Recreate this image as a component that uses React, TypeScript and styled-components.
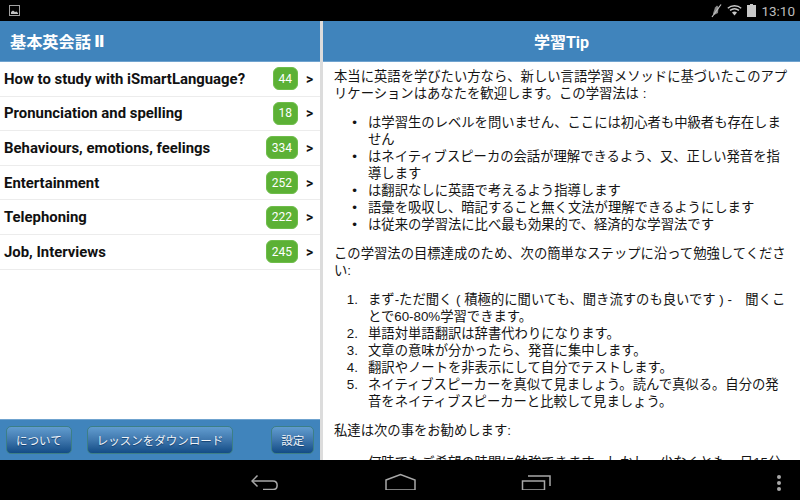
import { createGlobalStyle, styled } from "styled-components";

const GlobalStyle = createGlobalStyle`
    html, body {
        margin: 0;
        padding: 0;
        background: #000;
    }
`;

const Screen = styled.div`
    width: 800px;
    height: 500px;
    display: flex;
    flex-direction: column;
    overflow: hidden;
    background: #000;
    font-family: "Liberation Sans", "Noto Sans CJK JP", sans-serif;
`;

const StatusBar = styled.div`
    height: 21px;
    flex: none;
    display: flex;
    align-items: center;
    justify-content: space-between;
    padding: 0 5px 0 9px;
    box-sizing: border-box;
    background: #000;
`;

const StatusRight = styled.div`
    display: flex;
    align-items: center;
    gap: 4px;
`;

const Clock = styled.span`
    font-family: Roboto, sans-serif;
    font-size: 13.5px;
    color: #bdbdbd;
    margin-left: 1px;
`;

const Main = styled.div`
    flex: 1;
    min-height: 0;
    display: flex;
    background: #fff;
`;

const LeftPane = styled.div`
    width: 320px;
    flex: none;
    display: flex;
    flex-direction: column;
`;

const Divider = styled.div`
    width: 3px;
    flex: none;
    background: #dcdcdc;
`;

const RightPane = styled.div`
    flex: 1;
    min-width: 0;
    display: flex;
    flex-direction: column;
`;

const LeftHeader = styled.header`
    height: 41px;
    flex: none;
    display: flex;
    align-items: center;
    padding-left: 10px;
    background: #4084bc;
    border-bottom: 1px solid #6fa3cf;
    box-sizing: border-box;
    color: #fff;
    font-family: "Noto Sans CJK JP", sans-serif;
    font-size: 16.2px;
    font-weight: 700;
`;

const Numeral = styled.span`
    font-family: "DejaVu Sans", sans-serif;
    font-weight: 700;
    margin-left: 3px;
`;

const RightHeader = styled(LeftHeader)`
    justify-content: center;
    padding-left: 0;
    font-family: Roboto, "Noto Sans CJK JP", sans-serif;
    font-size: 16px;
`;

const Topics = styled.ul`
    flex: 1;
    min-height: 0;
    margin: 0;
    padding: 0;
    list-style: none;
`;

const Topic = styled.li`
    height: 34.6px;
    box-sizing: border-box;
    display: flex;
    align-items: center;
    padding: 0 7px 0 4px;
    border-bottom: 1px solid #ececec;
`;

const TopicName = styled.span`
    flex: 1;
    font-family: Roboto, sans-serif;
    font-size: 14.9px;
    font-weight: 700;
    color: #111;
`;

const Badge = styled.span`
    min-width: 25px;
    height: 23px;
    padding: 0 5px;
    box-sizing: border-box;
    display: flex;
    align-items: center;
    justify-content: center;
    border-radius: 6px;
    background: #5cb135;
    border: 1px solid #6fbd4b;
    font-family: Roboto, sans-serif;
    font-size: 12px;
    color: #fff;
`;

const Chevron = styled.span`
    width: 7px;
    margin-left: 8px;
    font-family: Roboto, sans-serif;
    font-size: 14px;
    font-weight: 700;
    color: #111;
`;

const Footer = styled.footer`
    height: 41px;
    flex: none;
    display: flex;
    align-items: center;
    padding: 0 6px;
    box-sizing: border-box;
    background: #4084bc;
    border-top: 1px solid #6fa3cf;
`;

const FooterButton = styled.button<{ $gap?: number }>`
    height: 28px;
    margin-right: ${(props) => props.$gap ?? 0}px;
    padding: 0 9px;
    box-sizing: border-box;
    border: 1px solid #3c7f86;
    border-radius: 5px;
    background: linear-gradient(#619ccf, #3f77ad 50%, #134c86);
    color: #f1f5f9;
    font-family: "Noto Sans CJK JP", sans-serif;
    font-size: 11.5px;
    white-space: nowrap;
    text-shadow: 0 1px 1px #123f70;
`;

const Content = styled.div`
    flex: 1;
    min-height: 0;
    overflow: hidden;
    padding: 0 11px;
    color: #141414;
    font-size: 13.33px;
    line-height: 17px;
`;

const Para = styled.p<{ $after?: number }>`
    margin: 6px 0 ${(props) => props.$after ?? 12}px;
`;

const Bullets = styled.ul`
    margin: 0 0 12px;
    padding-left: 34px;

    li::marker {
        content: "•\u00a0\u00a0\u00a0";
    }
`;

const Steps = styled.ol`
    margin: 0 0 12px;
    padding-left: 34px;

    li::marker {
        content: counter(list-item) ".\u00a0\u00a0\u2009";
    }
`;

const NavBar = styled.nav`
    height: 40px;
    flex: none;
    display: flex;
    align-items: center;
    background: #000;
    padding-left: 251px;
    box-sizing: border-box;
`;

const NavIcon = styled.svg<{ $gap?: number }>`
    display: block;
    margin-right: ${(props) => props.$gap ?? 0}px;
    fill: none;
    stroke: #a8a8a8;
    stroke-width: 1.5;
`;

const topics = [
    { name: "How to study with iSmartLanguage?", count: 44 },
    { name: "Pronunciation and spelling", count: 18 },
    { name: "Behaviours, emotions, feelings", count: 334 },
    { name: "Entertainment", count: 252 },
    { name: "Telephoning", count: 222 },
    { name: "Job, Interviews", count: 245 },
];

const bullets = [
    "は学習生のレベルを問いません、ここには初心者も中級者も存在しません",
    "はネイティブスピーカの会話が理解できるよう、又、正しい発音を指導します",
    "は翻訳なしに英語で考えるよう指導します",
    "語彙を吸収し、暗記すること無く文法が理解できるようにします",
    "は従来の学習法に比べ最も効果的で、経済的な学習法です",
];

const steps = [
    "まず-ただ聞く ( 積極的に聞いても、聞き流すのも良いです ) -　聞くことで60-80%学習できます。",
    "単語対単語翻訳は辞書代わりになります。",
    "文章の意味が分かったら、発音に集中します。",
    "翻訳やノートを非表示にして自分でテストします。",
    "ネイティブスピーカーを真似て見ましょう。読んで真似る。自分の発音をネイティブスピーカーと比較して見ましょう。",
];

function App() {
    return (
        <Screen>
            <GlobalStyle />
            <StatusBar>
                <svg width="11" height="11" viewBox="0 0 11 11">
                    <rect x="0.5" y="0.5" width="10" height="10" fill="none" stroke="#a0a0a0" />
                    <path d="M2 9 V7 L4 5.5 L6 7 L7.5 6.5 L9 8 V9 Z" fill="#c0c0c0" />
                </svg>
                <StatusRight>
                    <svg width="12" height="14" viewBox="0 0 12 14">
                        <path d="M7 1.5 L8.5 3 L8 9 L4 11 L3 9.5 L5 3.5 Z" fill="#8a8a8a" />
                        <path d="M11 0.5 L2 13" stroke="#c0c0c0" strokeWidth="1.2" />
                    </svg>
                    <svg width="17" height="11" viewBox="0 0 15 11" fill="none" stroke="#c8c8c8">
                        <path d="M0.8 3.2 C4.5 0 10.5 0 14.2 3.2" strokeWidth="1.4" />
                        <path d="M3 5.4 C5.6 3.4 9.4 3.4 12 5.4" strokeWidth="1.4" />
                        <path d="M5 7.4 L7.5 10.6 L10 7.4 C8.6 6.2 6.4 6.2 5 7.4 Z" fill="#c8c8c8" stroke="none" />
                    </svg>
                    <svg width="9" height="13" viewBox="0 0 9 13">
                        <path d="M3 0 H6 V1 H9 V13 H0 V1 H3 Z" fill="#c8c8c8" />
                    </svg>
                    <Clock>13:10</Clock>
                </StatusRight>
            </StatusBar>
            <Main>
                <LeftPane>
                    <LeftHeader>
                        基本英会話<Numeral>Ⅱ</Numeral>
                    </LeftHeader>
                    <Topics>
                        {topics.map((topic) => (
                            <Topic key={topic.name}>
                                <TopicName>{topic.name}</TopicName>
                                <Badge>{topic.count}</Badge>
                                <Chevron>&gt;</Chevron>
                            </Topic>
                        ))}
                    </Topics>
                    <Footer>
                        <FooterButton $gap={15}>について</FooterButton>
                        <FooterButton $gap={38}>レッスンをダウンロード</FooterButton>
                        <FooterButton>設定</FooterButton>
                    </Footer>
                </LeftPane>
                <Divider />
                <RightPane>
                    <RightHeader>学習Tip</RightHeader>
                    <Content>
                        <Para>
                            本当に英語を学びたい方なら、新しい言語学習メソッドに基づいたこのアプリケーションはあなたを歓迎します。この学習法は :
                        </Para>
                        <Bullets>
                            {bullets.map((item) => (
                                <li key={item}>{item}</li>
                            ))}
                        </Bullets>
                        <Para>
                            この学習法の目標達成のため、次の簡単なステップに沿って勉強してください:
                        </Para>
                        <Steps>
                            {steps.map((item) => (
                                <li key={item}>{item}</li>
                            ))}
                        </Steps>
                        <Para $after={15}>私達は次の事をお勧めします:</Para>
                        <Bullets>
                            <li>何時でもご希望の時間に勉強できます。しかし、少なくとも一日15分</li>
                        </Bullets>
                    </Content>
                </RightPane>
            </Main>
            <NavBar>
                <NavIcon $gap={106} width="28" height="20" viewBox="0 0 28 20">
                    <path d="M6.5 5.5 L1 11 L6.5 16.5" />
                    <path d="M1 11 H22 C27.5 11 27.5 19.5 22 19.5 H12" />
                </NavIcon>
                <NavIcon $gap={105} width="31" height="20" viewBox="0 0 31 20">
                    <path d="M1 10 L15.5 4.5 L30 10 V20 H1 Z" />
                </NavIcon>
                <NavIcon $gap={225} width="30" height="20" viewBox="0 0 30 20">
                    <rect x="1.5" y="11" width="22" height="9" />
                    <path d="M7 6 H29 V16" />
                </NavIcon>
                <NavIcon width="6" height="22" viewBox="0 0 6 22">
                    <circle cx="3" cy="8" r="2" fill="#a8a8a8" stroke="none" />
                    <circle cx="3" cy="14" r="2" fill="#a8a8a8" stroke="none" />
                    <circle cx="3" cy="20" r="2" fill="#a8a8a8" stroke="none" />
                </NavIcon>
            </NavBar>
        </Screen>
    );
}

export default App;
